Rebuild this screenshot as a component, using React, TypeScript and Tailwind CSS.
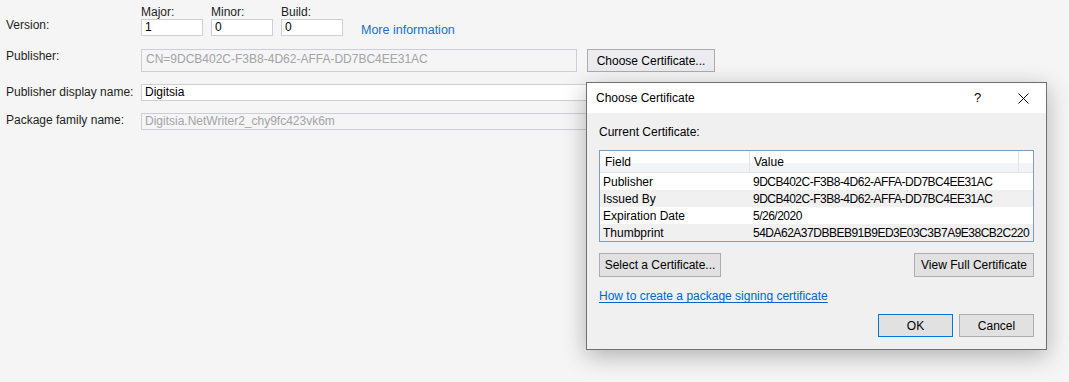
import React from 'react'

const rows = [
  { field: 'Publisher', value: '9DCB402C-F3B8-4D62-AFFA-DD7BC4EE31AC' },
  { field: 'Issued By', value: '9DCB402C-F3B8-4D62-AFFA-DD7BC4EE31AC' },
  { field: 'Expiration Date', value: '5/26/2020' },
  { field: 'Thumbprint', value: '54DA62A37DBBEB91B9ED3E03C3B7A9E38CB2C220' },
]

function VersionBox({ label, value }: { label: string; value: string }) {
  return (
    <div className="flex flex-col w-[62px]">
      <div className="leading-[14px] h-[14px]">{label}</div>
      <div className="h-[17px] bg-white border border-[#cccedb] pl-[3px] leading-[15px] text-black">{value}</div>
    </div>
  )
}

function CertificateDialog() {
  return (
    <div className="absolute left-[586px] top-[82px] w-[461px] h-[268px] border border-[#707070] bg-[#f0f0f0] shadow-[0_6px_22px_rgba(0,0,0,0.28)] flex flex-col text-black">
      <div className="h-[30px] bg-white flex items-center pl-[9px]">
        <span className="flex-1">Choose Certificate</span>
        <span className="w-[45px] text-center text-[13px]">?</span>
        <span className="w-[46px] flex justify-center">
          <svg width="11" height="11" viewBox="0 0 11 11">
            <path d="M0.5 0.5L10.5 10.5M10.5 0.5L0.5 10.5" stroke="#000" strokeWidth="1" fill="none" />
          </svg>
        </span>
      </div>

      <div className="flex-1 flex flex-col px-[12px] pt-[12px]">
        <div className="leading-[14px]">Current Certificate:</div>

        <div className="mt-[11px] border border-[#7b9ebd] bg-white">
          <div className="flex h-[22px] border-b border-[#e5e5e5] bg-[linear-gradient(#ffffff_0%,#ffffff_55%,#f3f4f5_56%,#f3f4f5_100%)]">
            <div className="w-[150px] shrink-0 border-r border-[#e3e3e3] pl-[5px] flex items-center">Field</div>
            <div className="w-[269px] shrink-0 border-r border-[#e3e3e3] pl-[4px] flex items-center">Value</div>
            <div className="flex-1" />
          </div>
          {rows.map((r, i) => (
            <div key={r.field} className={`flex h-[17px] items-center whitespace-nowrap ${i % 2 ? 'bg-[#f0f0f0]' : 'bg-white'}`}>
              <div className="w-[150px] shrink-0 pl-[3px]">{r.field}</div>
              <div className="pl-[3px] tracking-[-0.5px]">{r.value}</div>
            </div>
          ))}
        </div>

        <div className="mt-[11px] flex justify-between">
          <button className="h-[24px] w-[122px] bg-[#e1e1e1] border border-[#adadad]">Select a Certificate...</button>
          <button className="h-[24px] w-[120px] bg-[#e1e1e1] border border-[#adadad]">View Full Certificate</button>
        </div>

        <div className="mt-[12px] leading-[14px]">
          <span className="text-[#0066cc] underline underline-offset-2">How to create a package signing certificate</span>
        </div>

        <div className="mt-[11px] flex justify-end gap-[6px]">
          <button className="h-[23px] w-[75px] bg-[#e1e1e1] border border-[#0078d7]">OK</button>
          <button className="h-[23px] w-[75px] bg-[#e1e1e1] border border-[#adadad]">Cancel</button>
        </div>
      </div>
    </div>
  )
}

export default function App() {
  return (
    <div className="relative w-[1069px] h-[382px] overflow-hidden bg-[#f5f5f5] text-[12px] text-[#1e1e1e] font-['Liberation_Sans',Arial,sans-serif]">
      <div className="pl-[6px] pt-[5px] flex flex-col">
        <div className="flex">
          <div className="w-[135px] mt-[13px] leading-[14px]">Version:</div>
          <div className="flex gap-[8px]">
            <VersionBox label="Major:" value="1" />
            <VersionBox label="Minor:" value="0" />
            <VersionBox label="Build:" value="0" />
          </div>
          <div className="ml-[18px] mt-[18px] leading-[14px] text-[12.5px] text-[#1a6fce]">More information</div>
        </div>

        <div className="flex mt-[12px]">
          <div className="w-[135px] leading-[14px]">Publisher:</div>
          <div className="w-[436px] h-[23px] border border-[#cccedb] pl-[4px] pt-[2px] leading-[14px] text-[#a2a4a5]">
            CN=9DCB402C-F3B8-4D62-AFFA-DD7BC4EE31AC
          </div>
          <button className="ml-[10px] w-[128px] h-[23px] bg-[#ececf0] border border-[#acacac] text-black">
            Choose Certificate...
          </button>
        </div>

        <div className="flex mt-[12px]">
          <div className="w-[135px] mt-[1px] leading-[14px]">Publisher display name:</div>
          <div className="w-[574px] h-[17px] bg-white border border-[#cccedb] pl-[3px] leading-[15px] text-black">Digitsia</div>
        </div>

        <div className="flex mt-[12px]">
          <div className="w-[135px] leading-[14px]">Package family name:</div>
          <div className="w-[574px] h-[17px] border border-[#cccedb] pl-[3px] leading-[15px] text-[#a2a4a5]">
            Digitsia.NetWriter2_chy9fc423vk6m
          </div>
        </div>
      </div>

      <CertificateDialog />
    </div>
  )
}
